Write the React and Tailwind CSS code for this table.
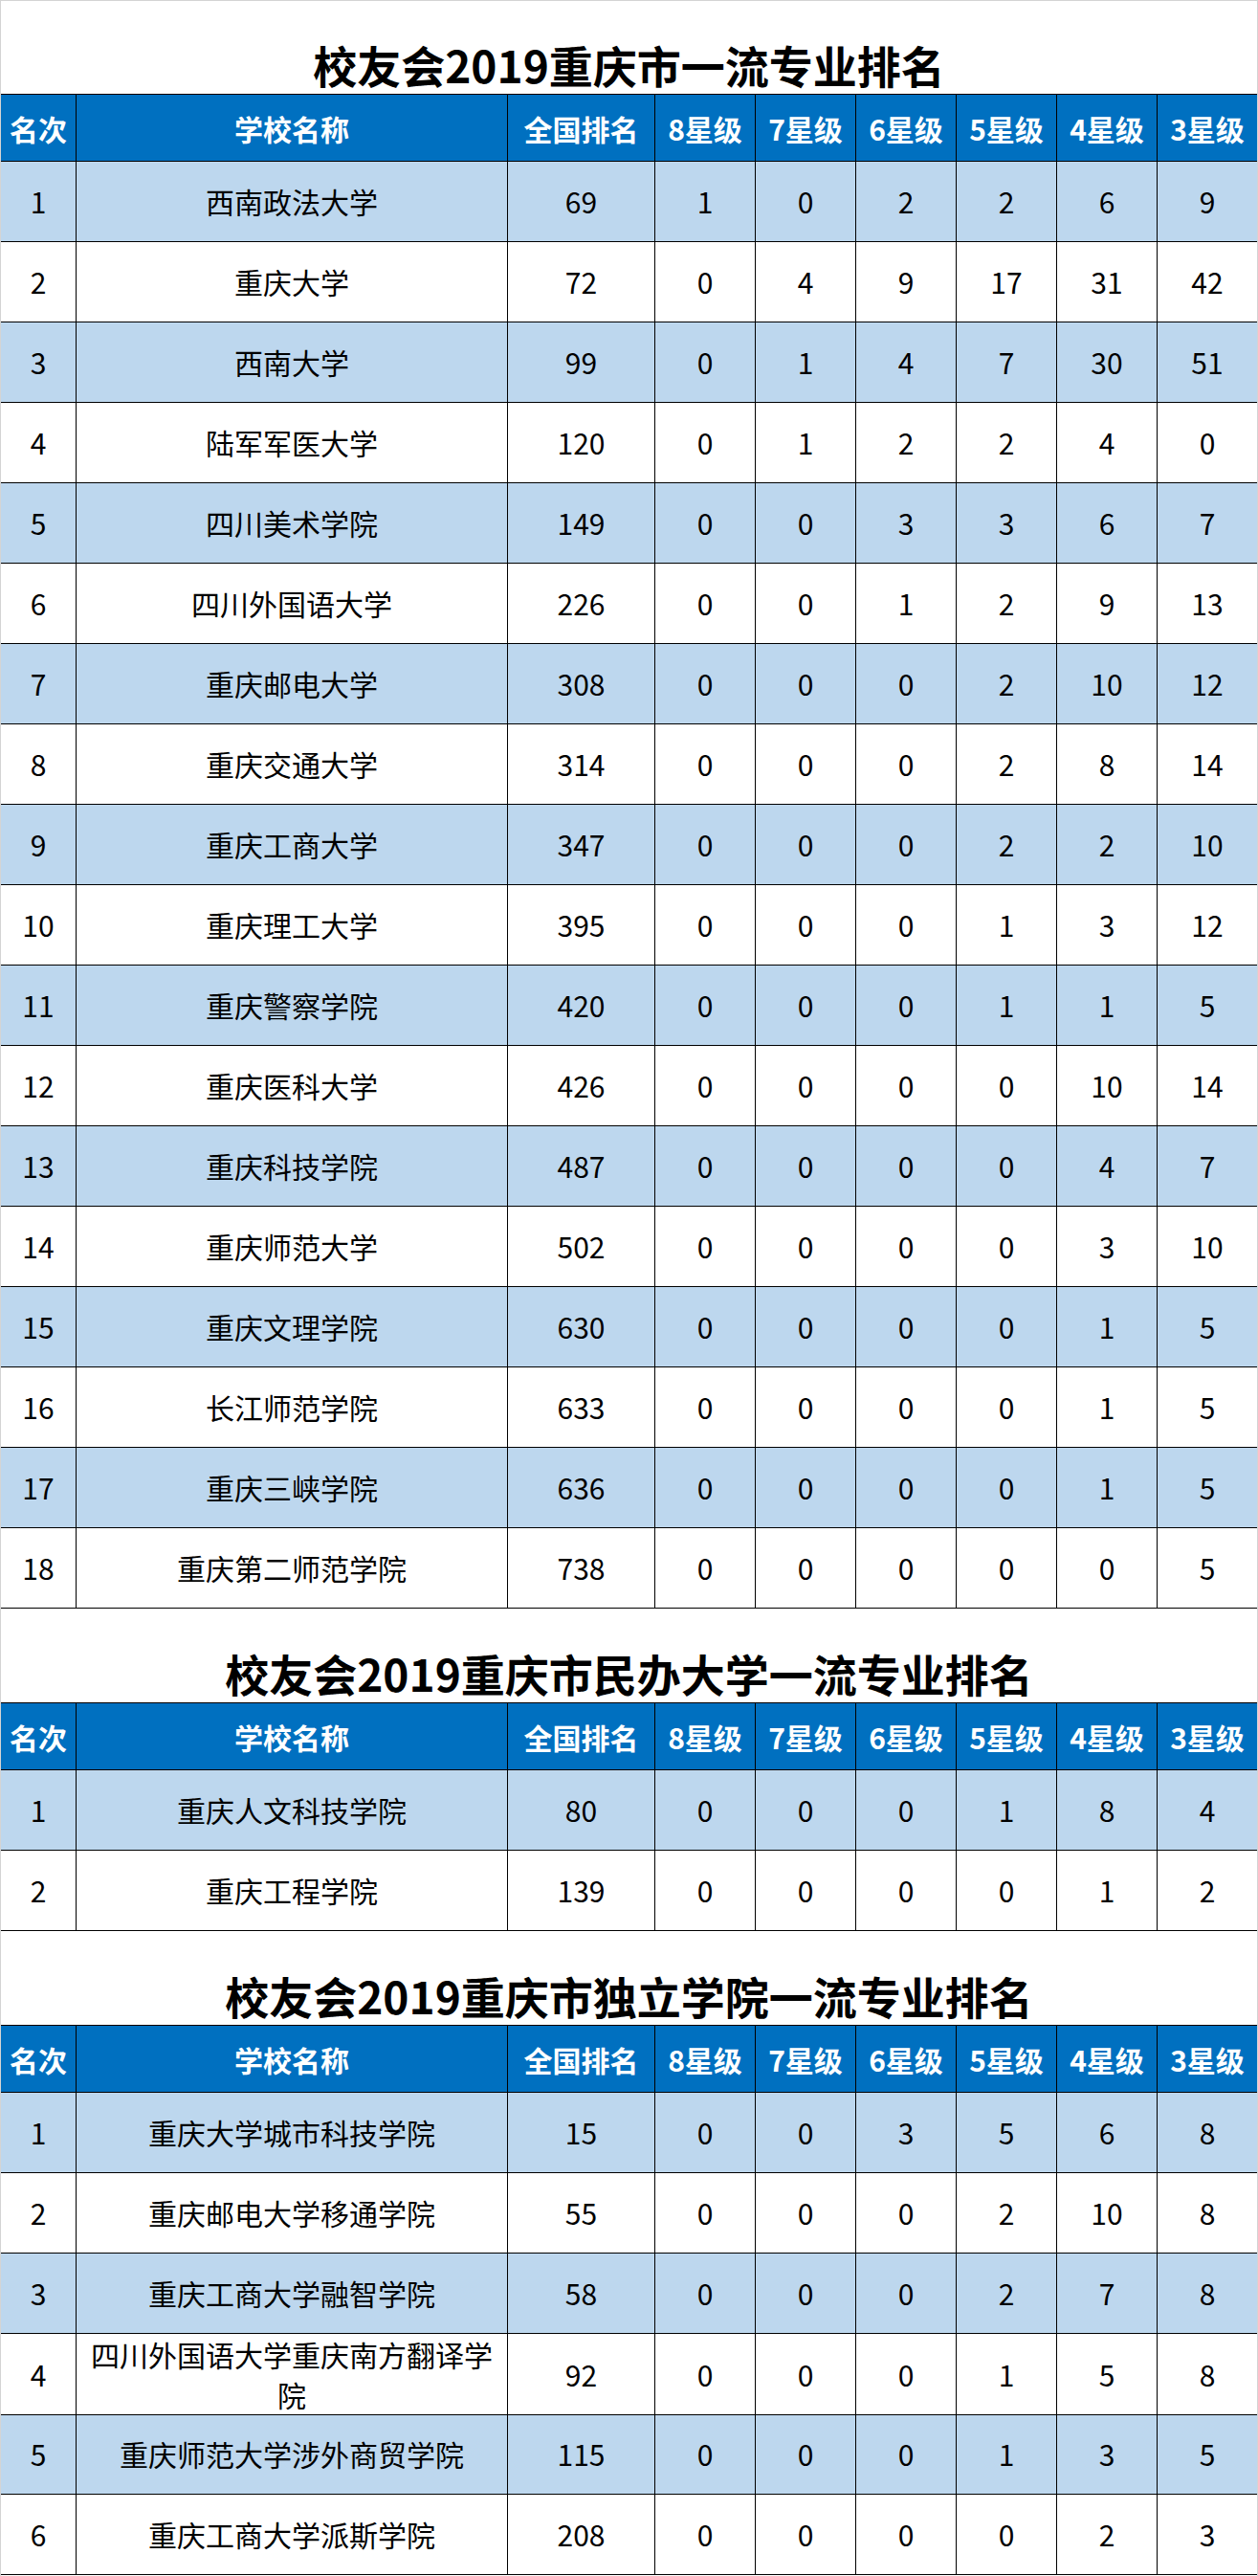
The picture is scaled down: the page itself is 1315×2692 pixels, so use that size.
const starHeaders = ['8星级', '7星级', '6星级', '5星级', '4星级', '3星级'];

const sections = [
  {
    title: '校友会2019重庆市一流专业排名',
    rows: [
      [1, '西南政法大学', 69, 1, 0, 2, 2, 6, 9],
      [2, '重庆大学', 72, 0, 4, 9, 17, 31, 42],
      [3, '西南大学', 99, 0, 1, 4, 7, 30, 51],
      [4, '陆军军医大学', 120, 0, 1, 2, 2, 4, 0],
      [5, '四川美术学院', 149, 0, 0, 3, 3, 6, 7],
      [6, '四川外国语大学', 226, 0, 0, 1, 2, 9, 13],
      [7, '重庆邮电大学', 308, 0, 0, 0, 2, 10, 12],
      [8, '重庆交通大学', 314, 0, 0, 0, 2, 8, 14],
      [9, '重庆工商大学', 347, 0, 0, 0, 2, 2, 10],
      [10, '重庆理工大学', 395, 0, 0, 0, 1, 3, 12],
      [11, '重庆警察学院', 420, 0, 0, 0, 1, 1, 5],
      [12, '重庆医科大学', 426, 0, 0, 0, 0, 10, 14],
      [13, '重庆科技学院', 487, 0, 0, 0, 0, 4, 7],
      [14, '重庆师范大学', 502, 0, 0, 0, 0, 3, 10],
      [15, '重庆文理学院', 630, 0, 0, 0, 0, 1, 5],
      [16, '长江师范学院', 633, 0, 0, 0, 0, 1, 5],
      [17, '重庆三峡学院', 636, 0, 0, 0, 0, 1, 5],
      [18, '重庆第二师范学院', 738, 0, 0, 0, 0, 0, 5],
    ],
  },
  {
    title: '校友会2019重庆市民办大学一流专业排名',
    rows: [
      [1, '重庆人文科技学院', 80, 0, 0, 0, 1, 8, 4],
      [2, '重庆工程学院', 139, 0, 0, 0, 0, 1, 2],
    ],
  },
  {
    title: '校友会2019重庆市独立学院一流专业排名',
    rows: [
      [1, '重庆大学城市科技学院', 15, 0, 0, 3, 5, 6, 8],
      [2, '重庆邮电大学移通学院', 55, 0, 0, 0, 2, 10, 8],
      [3, '重庆工商大学融智学院', 58, 0, 0, 0, 2, 7, 8],
      [4, ['四川外国语大学重庆南方翻译学', '院'], 92, 0, 0, 0, 1, 5, 8],
      [5, '重庆师范大学涉外商贸学院', 115, 0, 0, 0, 1, 3, 5],
      [6, '重庆工商大学派斯学院', 208, 0, 0, 0, 0, 2, 3],
    ],
  },
];

const gridCols = 'grid grid-cols-[79px_451px_154px_105px_105px_105px_105px_105px_104px]';

function Cell({ children, last }) {
  return (
    <div className={`flex items-center justify-center text-center border-b border-black ${last ? '' : 'border-r'}`}>
      {children}
    </div>
  );
}

function Section({ title, rows, first }) {
  return (
    <div>
      {/* Title */}
      <div className={`flex items-end justify-center pb-[8px] ${first ? 'h-[97px]' : 'h-[98px]'}`}>
        <h1 className="text-[46px] leading-none font-bold text-black">{title}</h1>
      </div>

      {/* Header */}
      <div className={`${gridCols} h-[71px] bg-[#0070c0] border-t border-black text-white font-bold text-[30px] leading-none`}>
        <Cell>名次</Cell>
        <Cell>学校名称</Cell>
        <Cell>全国排名</Cell>
        {starHeaders.map((h, i) => (
          <Cell key={h} last={i === starHeaders.length - 1}>{h}</Cell>
        ))}
      </div>

      {/* Rows */}
      {rows.map((row, idx) => {
        const [rank, name, national, ...stars] = row;
        return (
          <div
            key={rank}
            className={`${gridCols} h-[84px] text-[30px] text-black ${idx % 2 === 0 ? 'bg-[#bdd7ee]' : 'bg-white'}`}
          >
            <Cell>{rank}</Cell>
            <Cell>
              {Array.isArray(name) ? (
                <span className="leading-[42px]">
                  {name[0]}
                  <br />
                  {name[1]}
                </span>
              ) : (
                name
              )}
            </Cell>
            <Cell>{national}</Cell>
            {stars.map((s, i) => (
              <Cell key={i} last={i === stars.length - 1}>{s}</Cell>
            ))}
          </div>
        );
      })}
    </div>
  );
}

export default function App() {
  return (
    <div
      className="w-[1315px] min-h-[2692px] bg-white border-t border-l border-r border-[#d4d4d4]"
      style={{ fontFamily: '"Noto Sans CJK SC", "Noto Sans", sans-serif' }}
    >
      {sections.map((s, i) => (
        <Section key={s.title} title={s.title} rows={s.rows} first={i === 0} />
      ))}
    </div>
  );
}
